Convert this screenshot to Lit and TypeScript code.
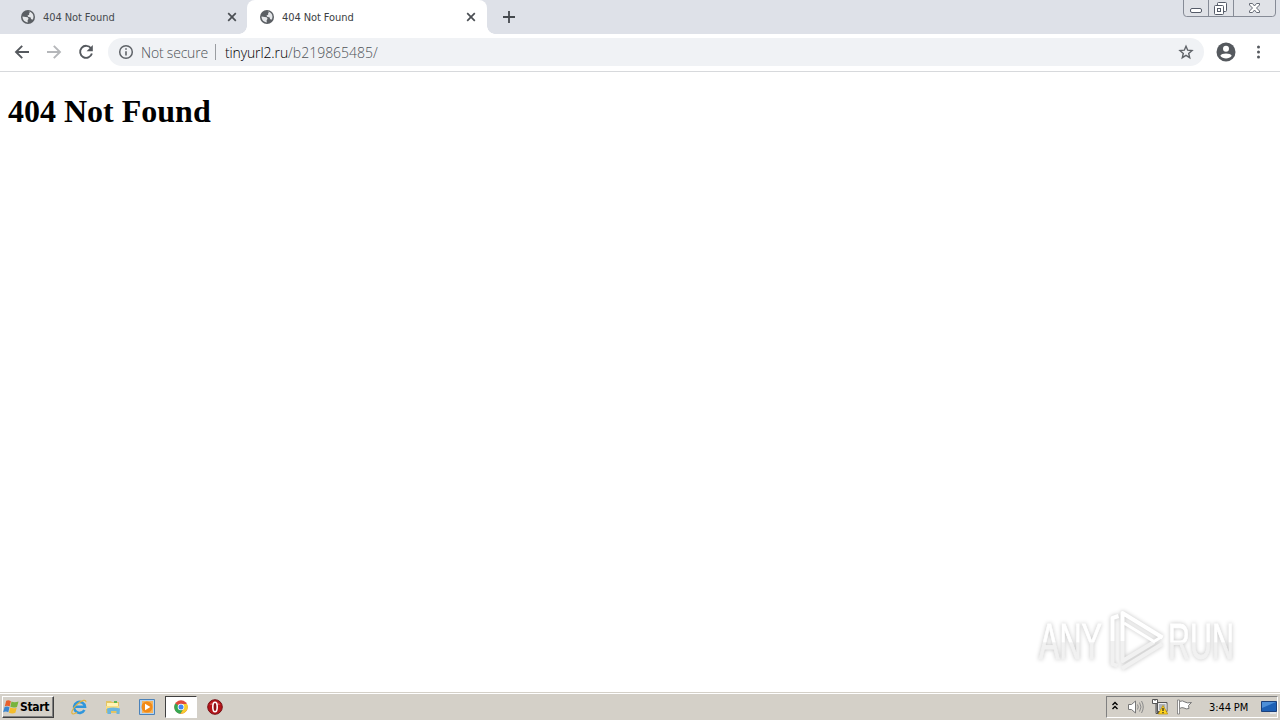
import { LitElement, html, svg, css } from 'lit';
import { customElement, property } from 'lit/decorators.js';
import { classMap } from 'lit/directives/class-map.js';

const globe = svg`
  <circle cx="7" cy="7" r="7" fill="#5b5f64"/>
  <path d="M1.500 6.600l3.200.5 2 .2.900 1.500-1 1.500.2 2.200C3.800 12.300 1.500 10 1.500 6.600z" fill="#e5e7ea"/>
  <path d="M7.600 1.500c2.900.3 4.900 2.500 4.900 5.300 0 1.200-.4 2.200-1 3L10 9l-.3-1.600-2.600-.6-.6-1.400 1.700-.7-.2-1.300 1-.7z" fill="#e5e7ea"/>`;

@customElement('browser-tab')
export class BrowserTab extends LitElement {
  @property() label = '';
  @property({ type: Boolean }) active = false;

  static styles = css`
    :host {
      display: block;
    }
    .tab {
      position: relative;
      box-sizing: border-box;
      display: flex;
      align-items: center;
      width: 240px;
      height: 34px;
      padding: 0 11px 0 13px;
      font: 11px 'DejaVu Sans Condensed', 'DejaVu Sans', sans-serif;
      letter-spacing: -0.08px;
      color: #45494e;
    }
    .tab--active {
      background: #fff;
      border-radius: 8px 8px 0 0;
      color: #3c4043;
    }
    .tab--active::before,
    .tab--active::after {
      content: '';
      position: absolute;
      bottom: 0;
      width: 8px;
      height: 8px;
    }
    .tab--active::before {
      left: -8px;
      background: radial-gradient(circle at 0 0, transparent 7.5px, #fff 8px);
    }
    .tab--active::after {
      right: -8px;
      background: radial-gradient(circle at 100% 0, transparent 7.5px, #fff 8px);
    }
    .label {
      flex: 1;
      margin-left: 8px;
      white-space: nowrap;
    }
    svg {
      display: block;
      flex: none;
    }
  `;

  render() {
    return html`
      <div class=${classMap({ tab: true, 'tab--active': this.active })}>
        <svg width="14" height="14" viewBox="0 0 14 14">${globe}</svg>
        <span class="label">${this.label}</span>
        <svg width="10" height="10" viewBox="0 0 10 10">
          <path d="M1.2 1.2l7.6 7.6M8.8 1.2L1.2 8.8" stroke="#4a4e53" stroke-width="1.7"/>
        </svg>
      </div>
    `;
  }
}

@customElement('any-run-mark')
export class AnyRunMark extends LitElement {
  static styles = css`
    :host {
      display: block;
    }
    svg {
      display: block;
      filter: drop-shadow(0 0 2px rgba(0, 0, 0, 0.24));
    }
    .word {
      font: 50px 'Liberation Sans Narrow', 'Liberation Sans', sans-serif;
      fill: url(#fade);
      stroke: url(#fade);
      stroke-width: 0.8px;
    }
  `;

  render() {
    return html`
      <svg width="230" height="76" viewBox="0 0 230 76">
        <defs>
          <linearGradient id="fade" x1="0" y1="20" x2="0" y2="58" gradientUnits="userSpaceOnUse">
            <stop offset="0.5" stop-color="#fff"/>
            <stop offset="0.52" stop-color="#f1f1f1"/>
          </linearGradient>
        </defs>
        <text class="word" x="9" y="56" textLength="63" lengthAdjust="spacingAndGlyphs">ANY</text>
        <text class="word" x="138" y="56" textLength="66" lengthAdjust="spacingAndGlyphs">RUN</text>
        <g fill="none" stroke-width="4" stroke-linejoin="round">
          <path d="M82.500 38V15l6-2" stroke="#fff"/>
          <path d="M82.500 38v23l5 2" stroke="#f1f1f1"/>
          <path d="M92.500 38v20L124 39" stroke="#f1f1f1"/>
          <path d="M132 41L92 65.500" stroke="#f1f1f1"/>
          <path d="M92.500 38V10l40 24.500" stroke="#fff"/>
          <path d="M94 20l30 18.500 8-5" stroke="#fff" stroke-width="3"/>
        </g>
      </svg>
    `;
  }
}

@customElement('app-root')
export class AppRoot extends LitElement {
  static styles = css`
    :host {
      display: flex;
      flex-direction: column;
      width: 1280px;
      height: 720px;
      overflow: hidden;
      background: #fff;
      position: relative;
    }
    svg {
      display: block;
      flex: none;
    }
    .strip {
      display: flex;
      height: 34px;
      background: #dee1e8;
    }
    .tabs {
      display: flex;
      padding-left: 8px;
    }
    .tabs browser-tab + browser-tab {
      margin-left: -1px;
    }
    .new-tab {
      margin: 11px 0 0 16px;
    }
    .window-buttons {
      margin: 0 4px 0 auto;
    }
    .toolbar {
      box-sizing: border-box;
      display: flex;
      align-items: center;
      height: 38px;
      padding: 0 14px 1px;
      border-bottom: 1px solid #d7d9dc;
    }
    .nav {
      display: flex;
      gap: 16px;
    }
    .omnibox {
      box-sizing: border-box;
      display: flex;
      align-items: center;
      flex: 1;
      height: 28px;
      margin: 0 12px 0 14px;
      padding: 0 10px;
      border-radius: 14px;
      background: #f0f2f5;
      font: 300 14px 'Open Sans', sans-serif;
      color: #4f5358;
      white-space: nowrap;
    }
    .secure {
      margin-left: 7px;
      letter-spacing: -0.2px;
    }
    .divider {
      width: 1px;
      height: 16px;
      margin: 0 9px 0 7px;
      background: #9a9da1;
    }
    .host {
      color: #000;
      letter-spacing: -0.12px;
    }
    .star {
      margin-left: auto;
    }
    .menu {
      margin-left: 14px;
    }
    .page {
      flex: 1;
      padding: 0 8px;
    }
    h1 {
      margin: 21px 0 0;
      font: bold 32px 'Liberation Serif', serif;
      color: #000;
    }
    .watermark {
      position: absolute;
      left: 1030px;
      top: 603px;
    }
    .taskbar {
      box-sizing: border-box;
      display: flex;
      align-items: center;
      height: 28px;
      padding: 1px 2px 0;
      border-top: 1px solid #d4d0c8;
      background: #d4d0c8;
      box-shadow: inset 0 1px #fff;
    }
    .start {
      box-sizing: border-box;
      display: flex;
      align-items: center;
      gap: 1px;
      width: 52px;
      height: 22px;
      border: 1px solid;
      border-color: #fff #404040 #404040 #fff;
      box-shadow: inset -1px -1px #808080;
      font: bold 12px 'DejaVu Sans Condensed', 'DejaVu Sans', sans-serif;
      letter-spacing: -0.35px;
      color: #000;
    }
    .launch {
      display: flex;
      align-items: center;
      margin-left: 8px;
    }
    .launch-item {
      box-sizing: border-box;
      display: flex;
      align-items: center;
      justify-content: center;
      width: 34px;
      height: 22px;
    }
    .launch-item--active {
      width: 32px;
      margin: 0 1px;
      border: 1px solid;
      border-color: #404040 #fff #fff #404040;
      background: #fff;
    }
    .tray {
      box-sizing: border-box;
      display: flex;
      align-items: center;
      width: 172px;
      height: 22px;
      margin-left: auto;
      padding-left: 4px;
      border: 1px solid;
      border-color: #808080 #fff #fff #808080;
      font: 11px 'DejaVu Sans Condensed', 'DejaVu Sans', sans-serif;
      letter-spacing: -0.1px;
      color: #000;
      white-space: nowrap;
    }
    .tray-icons {
      display: flex;
      align-items: center;
      gap: 8px;
    }
    .clock {
      margin-left: 17px;
    }
    .desktop {
      margin-left: auto;
    }
  `;

  private launchers = [
    {
      name: 'ie',
      icon: svg`
        <path d="M13.400 11A5.500 5.500 0 1 1 14 7.800H4" fill="none" stroke="#2f96dc" stroke-width="2.600"/>
        <path d="M14.800 3.200C15.600.2 11.200.8 6 5.400.8 10-.5 15 2.200 15c1.200 0 2.600-.8 3.800-1.700" fill="none" stroke="#e3b33b" stroke-width="1.200"/>`,
    },
    {
      name: 'explorer',
      icon: svg`
        <path d="M1 2h5l1 1h7v11H1z" fill="#e3c463"/>
        <path d="M2 4h11v4H2z" fill="#fff3b5"/>
        <path d="M9 2h3v2H9z" fill="#5ab552"/>
        <path d="M1 7h13v3H1z" fill="#f6dd83"/>
        <path d="M2 9.500q6-2 13 0L14.500 15h-3v-3H6v3H2.500z" fill="#69b5df"/>`,
    },
    {
      name: 'player',
      icon: svg`
        <path d="M.5.5h15v15H.5z" fill="#b7d3ee" stroke="#4b82b9"/>
        <path d="M3 2h11v12H3z" fill="#f5b35b"/>
        <circle cx="8" cy="8" r="5.500" fill="#f28a17"/>
        <path d="M6 4.800v6.400L11.400 8z" fill="#fff"/>`,
    },
    {
      name: 'chrome',
      active: true,
      icon: svg`
        <circle cx="8" cy="8" r="6.700" fill="#e04a3c"/>
        <path d="M8 8L2.200 4.600A6.700 6.700 0 0 0 7.500 14.700L11 9z" fill="#36a852"/>
        <path d="M8 5h6a6.700 6.700 0 0 1-6.500 9.700L11 9z" fill="#f7cd2e"/>
        <circle cx="8" cy="8" r="3.300" fill="#fff"/>
        <circle cx="8" cy="8" r="2.500" fill="#4285f4"/>`,
    },
    {
      name: 'opera',
      icon: svg`
        <circle cx="8" cy="8" r="7.300" fill="#b51419" stroke="#761015"/>
        <path d="M2.500 6a6 5 0 0 1 11 0z" fill="#d0474b"/>
        <ellipse cx="8" cy="8" rx="2.200" ry="4.700" fill="#8f0f14" stroke="#fff" stroke-width="1.600"/>`,
    },
  ];

  private renderWindowButtons() {
    return html`
      <svg class="window-buttons" width="93" height="17" viewBox="0 0 93 17" fill="none">
        <path d="M.5-1v14q0 3.500 3 3.500h86q3 0 3-3.500V-1" fill="#e0e2e7" stroke="#868b96"/>
        <path d="M25.500 0v16M50.500 0v16" stroke="#868b96"/>
        <rect x="7.500" y="8.500" width="11" height="4" rx="1.500" fill="#fff" stroke="#555b68"/>
        <rect x="34.500" y="2.500" width="9" height="9" rx="1" fill="#fff" stroke="#555b68"/>
        <rect x="31.500" y="5.500" width="9" height="9" rx="1" fill="#fff" stroke="#555b68"/>
        <rect x="34.500" y="8.500" width="3" height="3" stroke="#555b68"/>
        <path d="M66.500 3.500h3l2 2.500 2-2.500h3v1.500L73.500 8l3 3v1.500h-3l-2-2.500-2 2.500h-3V11l3-3-3-3z" fill="#fff" stroke="#656a75"/>
      </svg>
    `;
  }

  private renderToolbar() {
    return html`
      <div class="toolbar">
        <div class="nav">
          <svg width="16" height="16" viewBox="0 0 16 16" fill="none" stroke="#55595e" stroke-width="1.900">
            <path d="M15 8H2.500M8.200 1.800L2 8l6.200 6.200"/>
          </svg>
          <svg width="16" height="16" viewBox="0 0 16 16" fill="none" stroke="#b5b7ba" stroke-width="1.900">
            <path d="M1 8h12.500M7.800 1.800L14 8l-6.200 6.200"/>
          </svg>
          <svg width="16" height="16" viewBox="0 0 16 16">
            <path d="M13 4.300A6 6 0 1 0 13.900 9.500" fill="none" stroke="#55595e" stroke-width="1.900"/>
            <path d="M14.800 1v6.200H8.600z" fill="#55595e"/>
          </svg>
        </div>
        <div class="omnibox">
          <svg width="16" height="16" viewBox="0 0 16 16" fill="none" stroke="#5f6368">
            <circle cx="8" cy="8" r="6.300" stroke-width="1.500"/>
            <path d="M8 7.200v4.300M8 4.300v1.500" stroke-width="1.600"/>
          </svg>
          <span class="secure">Not secure</span>
          <span class="divider"></span>
          <span class="host">tinyurl2.ru</span><span class="path">/b219865485/</span>
          <svg class="star" width="16" height="16" viewBox="0 0 16 16" fill="none" stroke="#5f6368" stroke-width="1.400">
            <path d="M8 2.200l1.700 4 4.300.4-3.300 2.800 1 4.300L8 11.400l-3.700 2.300 1-4.300L2 6.600l4.300-.4z"/>
          </svg>
        </div>
        <svg width="20" height="20" viewBox="0 0 20 20">
          <circle cx="10" cy="10" r="9.500" fill="#55595e"/>
          <circle cx="10" cy="6.800" r="3" fill="#fff"/>
          <path d="M4.300 13.800c1-3 10.400-3 11.400 0-2.500 3.600-8.900 3.600-11.400 0z" fill="#fff"/>
        </svg>
        <svg class="menu" width="16" height="16" viewBox="0 0 16 16" fill="#55595e">
          <circle cx="8.500" cy="3" r="1.500"/>
          <circle cx="8.500" cy="8" r="1.500"/>
          <circle cx="8.500" cy="13" r="1.500"/>
        </svg>
      </div>
    `;
  }

  private renderTaskbar() {
    return html`
      <div class="taskbar">
        <div class="start">
          <svg width="16" height="16" viewBox="0 0 16 16">
            <path d="M3.200 1.700Q5.500.5 7.900 2.200L6.700 7.500Q4.400 6 1.800 7.200z" fill="#e8602c"/>
            <path d="M8.500 2.600Q11.500 4 15.500 2.500l-1.500 5.400Q10.500 9.200 7.300 7.800z" fill="#77b43f"/>
            <path d="M1.600 8q2.500-1.200 4.900.2l-1.200 5.100Q3 12 .1 13.200z" fill="#3b86cf"/>
            <path d="M7.200 8.600q3 1.400 6.500.1l-1.300 5.100q-3.200 1.400-6.500-.1z" fill="#f4bd2c"/>
          </svg>
          <span>Start</span>
        </div>
        <div class="launch">
          ${this.launchers.map(
            (item) => html`
              <div class=${classMap({ 'launch-item': true, 'launch-item--active': !!item.active })}>
                <svg width="16" height="16" viewBox="0 0 16 16">${item.icon}</svg>
              </div>
            `
          )}
        </div>
        <div class="tray">
          <div class="tray-icons">
            <svg width="8" height="12" viewBox="0 0 8 12" fill="none" stroke="#000" stroke-width="1.400">
              <path d="M1.500 4L4 1.500 6.500 4M1.500 8L4 5.500 6.500 8"/>
            </svg>
            <svg width="17" height="16" viewBox="0 0 17 16" fill="none" stroke="#777">
              <path d="M1.500 5.500h3L8.500 2v12l-4-3.500h-3z" fill="#fff"/>
              <path d="M10.500 5.500q1.500 2.500 0 5M12.500 3.500q3 4.500 0 9M14.500 2q3.500 6 0 12" stroke="#8a8a8a"/>
            </svg>
            <svg width="16" height="16" viewBox="0 0 16 16">
              <path d="M5.500 3.500h9.500v9H5.500z" fill="#aeb3b9" stroke="#555"/>
              <path d="M6.500 4.500H14v7H6.500z" fill="none" stroke="#eee"/>
              <path d="M.5.500h5v4h-1.500v10h3v-1H5v-9H.5z" fill="#fff" stroke="#555"/>
              <path d="M3 0v2" stroke="#555"/>
              <path d="M11 6.500l4.700 8.500H6.300z" fill="#ffd51f" stroke="#b88c00" stroke-width=".7"/>
              <path d="M11 9v3M11 13v1.200" stroke="#222" stroke-width="1.200"/>
            </svg>
            <svg width="16" height="16" viewBox="0 0 16 16">
              <path d="M3.500 2.500q3-1.500 5.500.5 2 1.500 6.500.5l-3 3 .5 3q-3 1-5-.5-2-1-4.500.5z" fill="#fff" stroke="#777"/>
              <path d="M1.500 1h2v14h-2z" fill="#fff" stroke="#777" stroke-width=".8"/>
            </svg>
          </div>
          <span class="clock">3:44 PM</span>
          <svg class="desktop" width="16" height="14" viewBox="0 0 16 14">
            <path d="M.5 1.500h15v10H.5z" fill="#1d60b5" stroke="#1b407b"/>
            <path d="M1 2h14L1 8z" fill="#4d8fd8"/>
            <path d="M9 13h6" stroke="#e6edf5" stroke-width="1.500"/>
          </svg>
        </div>
      </div>
    `;
  }

  render() {
    return html`
      <div class="strip">
        <div class="tabs">
          <browser-tab label="404 Not Found"></browser-tab>
          <browser-tab label="404 Not Found" active></browser-tab>
        </div>
        <svg class="new-tab" width="12" height="12" viewBox="0 0 12 12">
          <path d="M6 0v12M0 6h12" stroke="#45494e" stroke-width="1.800"/>
        </svg>
        ${this.renderWindowButtons()}
      </div>
      ${this.renderToolbar()}
      <div class="page">
        <h1>404 Not Found</h1>
      </div>
      <any-run-mark class="watermark"></any-run-mark>
      ${this.renderTaskbar()}
    `;
  }
}
